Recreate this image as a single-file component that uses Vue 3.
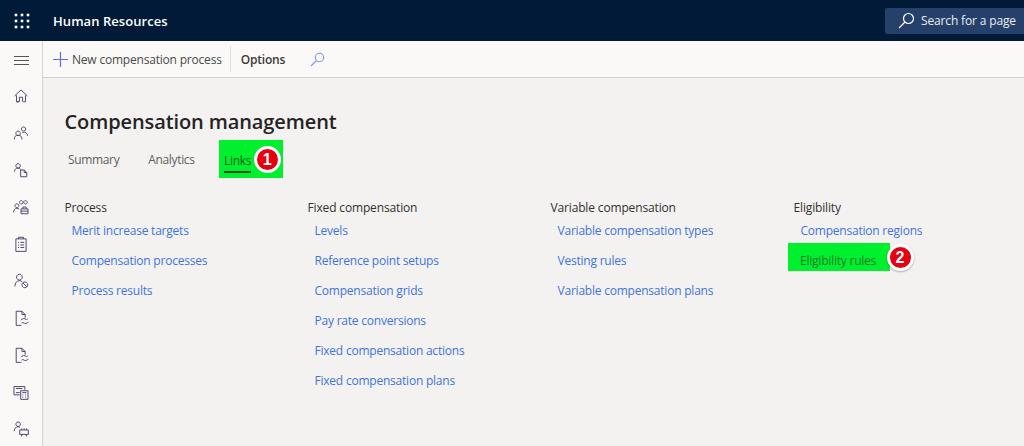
<script setup>
const rail = [
  { id: 'home', d: ['M15 21.500v-7h-5v7H5.500V11.500M2.500 12.500 12.500 3l10 9.500M19.500 21.500V11.500M5.500 21.500h3.500M16 21.500h3.500'] },
  { id: 'people', d: ['M16.500 3a3.300 3.300 0 1 1-.01 0M8 9.500a3.500 3.500 0 1 1-.01 0M2 22.500c0-4.500 2-6.500 6-6.500s6 2 6 6.500M14.500 11c.5 1 3 1 3.500 0 2.500.5 4.500 2.500 4.500 6'] },
  { id: 'persondoc', d: ['M8 2.500a3.500 3.500 0 1 1-.01 0M2 15c0-3 2.500-5.500 6-5.500 2 0 3.500 1 4.500 2.500M12 12.500h5.500l4 4v6.500H12zM17.500 12.500v4h4'] },
  { id: 'team', d: ['M6 7.500a3 3 0 1 1-.01 0M1 21c0-4 2-6.500 5-6.500 1.500 0 2.500.5 3.500 1.500M13 2.500a2.700 2.700 0 1 1-.01 0M19.500 2.500a2.700 2.700 0 1 1-.01 0M12.500 15.500h11V23h-11zM15.500 15.500v-3h5v3M12.500 19h11'] },
  { id: 'clip', d: ['M4.500 4.500h16V24h-16zM8.500 4.500V2h8v2.500M8 10h1.500M11.500 10h6M8 14h1.500M11.500 14h6M8 18h1.500M11.500 18h6'] },
  { id: 'personblock', d: ['M10 2a4.500 4.500 0 1 1-.01 0M3 21c0-5.500 3-9 7-9 2 0 3.500.5 4.500 2M18.500 14a4.500 4.500 0 1 1-.01 0M15.300 15.300l6.400 6.400'] },
  { id: 'docsync', d: ['M5 2h9l5 5v5M14 2v5h5M5 2v22h8M12.500 16c1.500-3 6-3.500 8.500-1l2-1M24 18.500c-1.500 3-6 3.500-8.500 1l-2 1'] },
  { id: 'docsync2', d: ['M5 2h9l5 5v5M14 2v5h5M5 2v22h8M12.500 16c1.500-3 6-3.500 8.500-1l2-1M24 18.500c-1.500 3-6 3.500-8.500 1l-2 1'] },
  { id: 'calc', d: ['M1.500 4h17v5M1.500 4v13h9M4.500 7h10M4.500 13.500h6M12 10.500h11.500V24H12zM14.500 13.500h6.500M14.500 17h1.500M19 17h1.500M14.500 20.500h1.500M19 20.500h1.500'] },
  { id: 'personcart', d: ['M8 1.500a3.500 3.500 0 1 1-.01 0M2 16c0-4 2-7 6-7 1 0 2 .5 3 1M10.500 14h13.500v7H10.500zM13.500 14v-2.500M17.500 14v-2.500M21 14v-2.500M13.500 21v3M21 21v3'] }
]
const columns = [
  { title: 'Process', links: ['Merit increase targets', 'Compensation processes', 'Process results'] },
  { title: 'Fixed compensation', links: ['Levels', 'Reference point setups', 'Compensation grids', 'Pay rate conversions', 'Fixed compensation actions', 'Fixed compensation plans'] },
  { title: 'Variable compensation', links: ['Variable compensation types', 'Vesting rules', 'Variable compensation plans'] },
  { title: 'Eligibility', links: ['Compensation regions', 'Eligibility rules'] }
]
</script>

<template>
  <div class="page">
    <header class="topbar">
      <svg class="waffle" width="16" height="16" viewBox="0 0 16 16">
        <template v-for="y in [2,8,14]" :key="y">
          <rect v-for="x in [2,8,14]" :key="x" :x="x - 1.300" :y="y - 1.300" width="2.600" height="2.600" fill="#fff" />
        </template>
      </svg>
      <span class="brand">Human Resources</span>
      <div class="search">
        <svg width="17" height="17" viewBox="0 0 17 17" fill="none" stroke="#fff" stroke-width="1.200">
          <circle cx="10.500" cy="6.500" r="5" />
          <path d="M7 10 1 16" />
        </svg>
        <span>Search for a page</span>
      </div>
    </header>
    <div class="body">
      <nav class="rail">
        <div class="burger"><i></i><i></i><i></i></div>
        <div class="rail-icons">
          <svg v-for="icon in rail" :key="icon.id" class="rail-icon" viewBox="0 0 25 25" fill="none" stroke="#4f4168" stroke-width="1.500">
            <path v-for="p in icon.d" :key="p" :d="p" />
          </svg>
        </div>
      </nav>
      <div class="main">
        <div class="toolbar">
          <button class="tool new">
            <svg width="15" height="15" viewBox="0 0 15 15" stroke="#5a6fd8" stroke-width="1.200"><path d="M7.500 0v15M0 7.500h15" /></svg>
            New compensation process
          </button>
          <span class="sep"></span>
          <span class="options">Options</span>
          <svg class="find" width="15" height="15" viewBox="0 0 15 15" fill="none" stroke="#7f93e6" stroke-width="1.100">
            <circle cx="9.500" cy="5.500" r="4.200" />
            <path d="M6.500 8.500 1 14" />
          </svg>
        </div>
        <section class="content">
          <h1>Compensation management</h1>
          <div class="tabs">
            <span class="tab">Summary</span>
            <span class="tab">Analytics</span>
            <span class="tab active">
              <span class="tab-label">Links</span>
              <b class="badge one">1</b>
            </span>
          </div>
          <div class="columns">
            <div v-for="c in columns" :key="c.title" class="column">
              <div class="col-title">{{ c.title }}</div>
              <div v-for="l in c.links" :key="l" class="link" :class="{ marked: l === 'Eligibility rules' }">
                {{ l }}
                <b v-if="l === 'Eligibility rules'" class="badge two">2</b>
              </div>
            </div>
          </div>
        </section>
      </div>
    </div>
  </div>
</template>

<style>
html, body { margin: 0; background: #f3f2f1; overflow: hidden; }
</style>

<style scoped>
.page {
  width: 1024px;
  height: 446px;
  display: flex;
  flex-direction: column;
  font-family: "Open Sans", "Noto Sans", sans-serif;
  font-size: 12px;
  color: #323130;
  overflow: hidden;
}
.topbar {
  flex: 0 0 41px;
  background: #001a38;
  display: flex;
  align-items: center;
  color: #fff;
}
.waffle { margin-left: 14px; }
.brand { margin-left: 23px; font-size: 13px; font-weight: 600; letter-spacing: 0.05px; }
.search {
  margin-left: auto;
  width: 139px;
  height: 26px;
  background: #25406a;
  border-radius: 2px 0 0 2px;
  display: flex;
  align-items: center;
  gap: 6px;
  padding-left: 13px;
  box-sizing: border-box;
  font-size: 12px;
  letter-spacing: -0.15px;
  white-space: nowrap;
  color: #e8edf4;
}
.body { flex: 1; display: flex; min-height: 0; }
.rail {
  flex: 0 0 42px;
  background: #faf9f8;
  border-right: 1px solid #d8d6d4;
  display: flex;
  flex-direction: column;
  align-items: center;
}
.burger {
  margin-top: 15px;
  width: 15px;
  display: flex;
  flex-direction: column;
  gap: 3px;
}
.burger i { display: block; height: 1px; background: #555; }
.rail-icons {
  margin-top: 23px;
  display: flex;
  flex-direction: column;
  gap: 21px;
}
.rail-icon { width: 16px; height: 16px; display: block; }
.main { flex: 1; display: flex; flex-direction: column; min-width: 0; }
.toolbar {
  flex: 0 0 37px;
  box-sizing: border-box;
  background: #faf9f8;
  border-bottom: 1px solid #d2d0ce;
  display: flex;
  align-items: center;
  padding-left: 10px;
}
.tool {
  border: 0;
  background: none;
  padding: 0;
  font: inherit;
  color: #4a4a4a;
  display: flex;
  align-items: center;
  gap: 4px;
  letter-spacing: -0.2px;
  white-space: nowrap;
}
.sep { width: 1px; height: 26px; background: #e1dfdd; margin: 0 10px 0 8px; }
.options { font-weight: 600; color: #3b3a39; letter-spacing: -0.2px; }
.find { margin-left: 25px; }
.content { flex: 1; background: #f3f2f1; padding: 30px 0 0 22px; }
h1 {
  margin: 0 0 0 -0.5px;
  font-size: 20px;
  line-height: 28px;
  font-weight: 600;
  color: #252423;
  letter-spacing: -0.1px;
}
.tabs { display: flex; align-items: stretch; height: 38px; margin-top: 4px; }
.tab {
  display: flex;
  align-items: center;
  color: #605e5c;
  letter-spacing: -0.35px;
  padding: 0 3px;
  margin-right: 23px;
}
.tab.active {
  position: relative;
  width: 64px;
  box-sizing: border-box;
  margin: 0 0 0 -2px;
  padding-left: 5.5px;
  background: #00f02e;
  color: #0a5a20;
}
.tab-label { border-bottom: 2px solid #0a4a1c; padding: 3px 0 2px; margin-top: 4px; }
.badge {
  position: absolute;
  box-sizing: border-box;
  display: flex;
  align-items: center;
  justify-content: center;
  border-radius: 50%;
  border: 3px solid #fff;
  background: #e60012;
  color: #fff;
  font-family: "Liberation Sans", sans-serif;
  font-size: 16px;
  font-weight: 700;
  line-height: 1;
  letter-spacing: 0;
}
.badge.one { width: 27px; height: 27px; left: 35px; top: 6px; }
.badge.two { width: 27px; height: 27px; left: 99px; top: 1px; box-shadow: 0 1px 2px rgba(0,0,0,.3); }
.columns { display: flex; margin-top: 21px; margin-left: -0.500px; }
.column { flex: 0 0 243px; }
.col-title { height: 18px; line-height: 18px; color: #323130; letter-spacing: -0.15px; }
.link {
  height: 30px;
  line-height: 30px;
  padding-left: 7px;
  color: #4174dc;
  letter-spacing: -0.22px;
  white-space: nowrap;
}
.col-title + .link { margin-top: -1px; }
.link.marked {
  position: relative;
  box-sizing: border-box;
  height: 28px;
  line-height: 36px;
  width: 102px;
  margin: -3px 0 0 -6px;
  padding-left: 12.500px;
  background: #00f02e;
  color: #0a7a2a;
}
</style>
